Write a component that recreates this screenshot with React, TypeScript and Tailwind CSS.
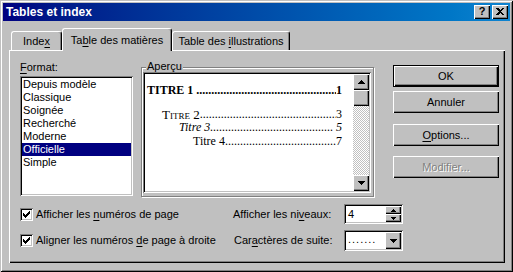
import React from "react";

const raised = "bg-[#c0c0c0] shadow-[inset_1px_1px_#fff,inset_-1px_-1px_#000,inset_-2px_-2px_#808080]";
const sunken = "shadow-[inset_1px_1px_#808080,inset_-1px_-1px_#fff,inset_2px_2px_#000,inset_-2px_-2px_#c0c0c0]";
const tab = "border-t border-l border-white border-r border-r-black rounded-t-[3px] shadow-[inset_-1px_0_#808080] bg-[#c0c0c0]";

const formats = ["Depuis modèle", "Classique", "Soignée", "Recherché", "Moderne", "Officielle", "Simple"];

const U = ({ children }: { children: React.ReactNode }) => (
  <span className="underline underline-offset-[2px]">{children}</span>
);

const ArrowUp = () => (
  <svg width="7" height="4" viewBox="0 0 7 4" shapeRendering="crispEdges">
    <path d="M3 0h1v1h1v1h1v1h1v1H0V3h1V2h1V1h1z" fill="#000" />
  </svg>
);

const ArrowDown = () => (
  <svg width="7" height="4" viewBox="0 0 7 4" shapeRendering="crispEdges">
    <path d="M0 0h7v1H6v1H5v1H4v1H3V3H2V2H1V1H0z" fill="#000" />
  </svg>
);

const SmallUp = () => (
  <svg width="5" height="3" viewBox="0 0 5 3" shapeRendering="crispEdges">
    <path d="M2 0h1v1h1v1h1v1H0V2h1V1h1z" fill="#000" />
  </svg>
);

const SmallDown = () => (
  <svg width="5" height="3" viewBox="0 0 5 3" shapeRendering="crispEdges">
    <path d="M0 0h5v1H4v1H3v1H2V2H1V1H0z" fill="#000" />
  </svg>
);

const checkCols = [
  [2, 4],
  [3, 5],
  [4, 6],
  [3, 5],
  [2, 4],
  [1, 3],
  [0, 2],
];

function CheckBox() {
  return (
    <div className={`w-[13px] h-[13px] bg-white ${sunken} flex items-center justify-center`}>
      <svg width="7" height="7" viewBox="0 0 7 7" shapeRendering="crispEdges">
        {checkCols.map(([a, b], x) => (
          <rect key={x} x={x} y={a} width="1" height={b - a + 1} fill="#000" />
        ))}
      </svg>
    </div>
  );
}

function Leader() {
  return <span className="flex-1 min-w-0 overflow-hidden whitespace-nowrap">{".".repeat(120)}</span>;
}

function TitleBar() {
  return (
    <div className="h-[18px] flex items-center justify-between pl-[3px] pr-[2px] bg-linear-to-r from-[#000080] to-[#1084d0]">
      <span className="text-white font-bold text-[12px] leading-[14px]">Tables et index</span>
      <div className="flex gap-[2px]">
        <div className={`w-[16px] h-[14px] ${raised} flex items-center justify-center font-bold text-[11px] leading-[11px] pb-[1px]`}>
          ?
        </div>
        <div className={`w-[16px] h-[14px] ${raised} flex items-center justify-center pb-[1px]`}>
          <svg width="8" height="7" viewBox="0 0 8 7" shapeRendering="crispEdges">
            <path d="M0 0h2l2 2 2-2h2L5 3.5 8 7H6L4 5 2 7H0l3-3.5z" fill="#000" />
          </svg>
        </div>
      </div>
    </div>
  );
}

function Tabs() {
  return (
    <div className="flex items-end h-[22px]">
      <div className={`ml-[2px] w-[51px] h-[19px] ${tab} flex justify-center pt-[3px]`}>
        <span>
          Inde<U>x</U>
        </span>
      </div>
      <div className={`relative z-10 w-[110px] h-[23px] -mb-[1px] ${tab} flex justify-center pt-[5px]`}>
        <span>
          Ta<U>b</U>le des matières
        </span>
      </div>
      <div className={`w-[118px] h-[19px] ${tab} flex justify-center pt-[3px]`}>
        <span>
          Table des <U>i</U>llustrations
        </span>
      </div>
    </div>
  );
}

function Preview() {
  return (
    <div className={`ml-[1px] w-[228px] h-[121px] ${sunken} p-[2px] flex`}>
      <div className="flex-1 min-w-0 overflow-hidden bg-white pl-[2px] pr-[11px] flex flex-col font-['Liberation_Serif',serif] text-[12px] leading-[13px]">
        <div className="mt-[10px] h-[13px] flex font-bold">
          <span className="shrink-0 pr-[3px]">TITRE 1</span>
          <Leader />
          <span className="shrink-0">1</span>
        </div>
        <div className="mt-[11px] h-[13px] flex pl-[15px]">
          <span className="shrink-0 text-[13px] [font-variant:small-caps]">Titre 2</span>
          <Leader />
          <span className="shrink-0">3</span>
        </div>
        <div className="h-[13px] flex pl-[32px] italic">
          <span className="shrink-0">Titre 3</span>
          <Leader />
          <span className="shrink-0">&nbsp;5</span>
        </div>
        <div className="mt-[1px] h-[13px] flex pl-[46px]">
          <span className="shrink-0">Titre 4</span>
          <Leader />
          <span className="shrink-0">7</span>
        </div>
      </div>
      <div className="w-[16px] shrink-0 flex flex-col">
        <div className={`h-[16px] ${raised} flex items-center justify-center`}>
          <ArrowUp />
        </div>
        <div className={`h-[16px] ${raised}`} />
        <div className="flex-1 bg-[image:repeating-conic-gradient(#c0c0c0_0_25%,#fff_0_50%)] bg-[length:2px_2px]" />
        <div className={`h-[16px] ${raised} flex items-center justify-center`}>
          <ArrowDown />
        </div>
      </div>
    </div>
  );
}

function Panel() {
  return (
    <div className="h-[213px] flex flex-col pt-[11px] pl-[11px] bg-[#c0c0c0] shadow-[inset_1px_1px_#fff,inset_-1px_-1px_#000,inset_-2px_-2px_#808080]">
      <div className="flex h-[136px]">
        <div className="w-[113px] flex flex-col">
          <div className="h-[15px] leading-[12px]">
            <U>F</U>ormat:
          </div>
          <div className={`h-[120px] bg-white ${sunken} p-[2px] flex flex-col`}>
            {formats.map((f) => (
              <div
                key={f}
                className={`h-[13px] leading-[13px] px-[1px] ${f === "Officielle" ? "bg-[#000080] text-white" : ""}`}
              >
                {f}
              </div>
            ))}
          </div>
        </div>

        <div className="ml-[8px] mt-[6px] w-[233px] h-[130px] border border-[#808080] shadow-[inset_1px_1px_#fff,1px_1px_#fff] flex flex-col">
          <span className="self-start -mt-[8px] ml-[4px] px-[1px] bg-[#c0c0c0] leading-[12px] h-[12px]">
            A<U>p</U>erçu
          </span>
          <Preview />
        </div>

        <div className="ml-[19px] w-[106px] flex flex-col pt-[4px]">
          <div className="h-[22px] border border-black flex">
            <div className={`flex-1 ${raised} flex items-center justify-center`}>OK</div>
          </div>
          <div className={`mt-[4px] h-[22px] ${raised} flex items-center justify-center`}>Annuler</div>
          <div className={`mt-[11px] h-[22px] ${raised} flex items-center justify-center`}>
            <span>
              <U>O</U>ptions...
            </span>
          </div>
          <div
            className={`mt-[10px] h-[22px] ${raised} flex items-center justify-center text-[#808080] [text-shadow:1px_1px_0_#fff]`}
          >
            Modifier...
          </div>
        </div>
      </div>

      <div className="mt-[7px] flex">
        <div className="w-[213px] flex flex-col gap-[6px]">
          <div className="h-[20px] flex items-center gap-[3px]">
            <CheckBox />
            <span>
              Afficher les <U>n</U>uméros de page
            </span>
          </div>
          <div className="h-[21px] flex items-center gap-[3px]">
            <CheckBox />
            <span>
              Aligner les numéros <U>d</U>e page à droite
            </span>
          </div>
        </div>
        <div className="w-[111px] flex flex-col gap-[6px]">
          <div className="h-[20px] flex items-center">
            <span>
              Afficher les ni<U>v</U>eaux:
            </span>
          </div>
          <div className="h-[21px] flex items-center pl-[1px]">
            <span>
              Car<U>a</U>ctères de suite:
            </span>
          </div>
        </div>
        <div className="w-[59px] flex flex-col gap-[6px]">
          <div className={`h-[20px] bg-white ${sunken} p-[2px] flex`}>
            <span className="flex-1 pl-[2px] leading-[16px]">4</span>
            <div className="w-[16px] flex flex-col">
              <div className={`h-[8px] ${raised} flex items-center justify-center`}>
                <SmallUp />
              </div>
              <div className={`h-[8px] ${raised} flex items-center justify-center`}>
                <SmallDown />
              </div>
            </div>
          </div>
          <div className={`h-[21px] bg-white ${sunken} p-[2px] flex`}>
            <span className="flex-1 pl-[2px] leading-[15px] tracking-[1px]">.......</span>
            <div className={`w-[16px] ${raised} flex items-center justify-center`}>
              <ArrowDown />
            </div>
          </div>
        </div>
      </div>
    </div>
  );
}

export default function App() {
  return (
    <div className="w-[513px] h-[272px] bg-[#c0c0c0] p-[3px] flex flex-col font-['Liberation_Sans',Arial,sans-serif] text-[11px] leading-[13px] text-black shadow-[inset_1px_1px_#c0c0c0,inset_-1px_-1px_#000,inset_2px_2px_#fff,inset_-2px_-2px_#808080]">
      <TitleBar />
      <div className="flex flex-col pt-[7px] pl-[6px] pr-[5px]">
        <Tabs />
        <Panel />
      </div>
    </div>
  );
}
